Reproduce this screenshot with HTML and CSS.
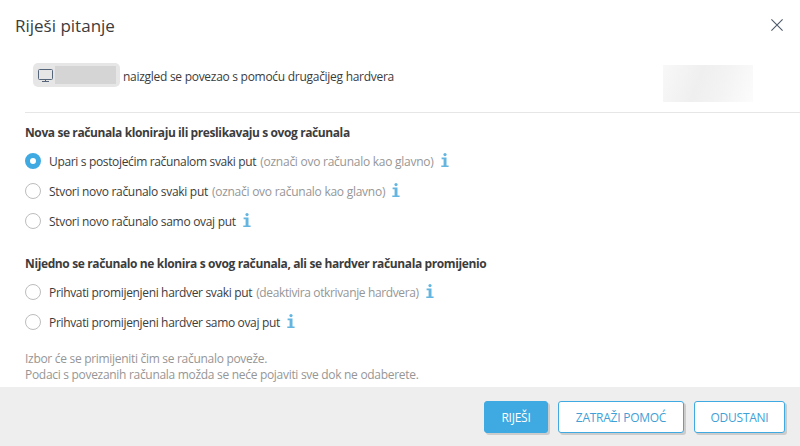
FILE: index.html
```html
<!DOCTYPE html>
<html lang="hr">
<head>
<meta charset="utf-8">
<title>Riješi pitanje</title>
<link rel="stylesheet" href="styles.css">
</head>
<body>
<div class="dialog">
  <header class="header">
    <h1 class="title">Riješi pitanje</h1>
    <svg class="close" width="12" height="12" viewBox="0 0 12 12"><path d="M.4.4l11.2 11.2M11.6.4L.4 11.6"/></svg>
  </header>
  <section class="device">
    <span class="chip">
      <svg class="monitor" width="16" height="13" viewBox="0 0 16 13"><path d="M1.5.5h12a1 1 0 0 1 1 1v8a1 1 0 0 1-1 1h-12a1 1 0 0 1-1-1v-8a1 1 0 0 1 1-1zM7.5 10.5v2M4 12.5h7"/></svg>
      <span class="chip-name"></span>
    </span>
    <span class="device-text">naizgled se povezao s pomoću drugačijeg hardvera</span>
    <span class="redacted"></span>
  </section>
  <main class="body">
    <h2 class="question q1">Nova se računala kloniraju ili preslikavaju s ovog računala</h2>
    <div class="option"><span class="radio checked"></span><span class="label l1">Upari s postojećim računalom svaki put</span><span class="hint h1">(označi ovo računalo kao glavno)</span><svg class="info" width="8" height="14" viewBox="0 0 8 14"><circle cx="4" cy="1.6" r="1.6"/><path d="M.6 4.6h4.9v7.8H7.6V14H.3v-1.6h2.3V6.2h-2z"/></svg></div>
    <div class="option"><span class="radio"></span><span class="label l2">Stvori novo računalo svaki put</span><span class="hint h2">(označi ovo računalo kao glavno)</span><svg class="info" width="8" height="14" viewBox="0 0 8 14"><circle cx="4" cy="1.6" r="1.6"/><path d="M.6 4.6h4.9v7.8H7.6V14H.3v-1.6h2.3V6.2h-2z"/></svg></div>
    <div class="option"><span class="radio"></span><span class="label l3">Stvori novo računalo samo ovaj put</span><svg class="info" width="8" height="14" viewBox="0 0 8 14"><circle cx="4" cy="1.6" r="1.6"/><path d="M.6 4.6h4.9v7.8H7.6V14H.3v-1.6h2.3V6.2h-2z"/></svg></div>
    <h2 class="question second q2">Nijedno se računalo ne klonira s ovog računala, ali se hardver računala promijenio</h2>
    <div class="option"><span class="radio"></span><span class="label l4">Prihvati promijenjeni hardver svaki put</span><span class="hint h4">(deaktivira otkrivanje hardvera)</span><svg class="info" width="8" height="14" viewBox="0 0 8 14"><circle cx="4" cy="1.6" r="1.6"/><path d="M.6 4.6h4.9v7.8H7.6V14H.3v-1.6h2.3V6.2h-2z"/></svg></div>
    <div class="option"><span class="radio"></span><span class="label l5">Prihvati promijenjeni hardver samo ovaj put</span><svg class="info" width="8" height="14" viewBox="0 0 8 14"><circle cx="4" cy="1.6" r="1.6"/><path d="M.6 4.6h4.9v7.8H7.6V14H.3v-1.6h2.3V6.2h-2z"/></svg></div>
    <p class="note">Izbor će se primijeniti čim se računalo poveže.<br>Podaci s povezanih računala možda se neće pojaviti sve dok ne odaberete.</p>
  </main>
  <footer class="footer">
    <button class="btn primary">RIJEŠI</button>
    <button class="btn help">ZATRAŽI POMOĆ</button>
    <button class="btn cancel">ODUSTANI</button>
  </footer>
</div>
</body>
</html>
```
FILE: styles.css
```css
* { box-sizing: border-box; }
body {
  margin: 0;
  background: #fff;
  color: #3c3c3c;
  font: 12px/16px "Open Sans", "Noto Sans", sans-serif;
  letter-spacing: -0.3px;
  white-space: nowrap;
}
.dialog { width: 800px; height: 446px; display: flex; flex-direction: column; overflow: hidden; }
.header { height: 50px; padding: 0 17px 0 15px; display: flex; align-items: center; justify-content: space-between; }
.title { margin: 2px 0 0; font-size: 17px; line-height: 24px; font-weight: 400; letter-spacing: 0; }
.close { fill: none; stroke: #4d5a6b; stroke-width: 1.1; }
.device { height: 63px; margin-left: 25px; padding: 13px 47px 0 8px; display: flex; align-items: flex-start; border-bottom: 1px solid #e6e6e6; }
.chip { width: 87px; height: 24px; padding: 0 4px 0 5px; border-radius: 5px; background: #e6e6e6; display: flex; align-items: center; gap: 1px; }
.monitor { fill: none; stroke: #55657a; }
.chip-name { width: 61px; height: 18px; background: #d5d5d5; }
.device-text { margin: 6px 0 0 3px; letter-spacing: -0.28px; }
.redacted { width: 90px; height: 37px; margin: 2px 0 0 auto; background: linear-gradient(110deg, #f8f8f8, #efefef 40%, #f3f3f3 65%, #fcfcfc); }
.body { flex: 1; min-height: 0; padding: 11px 25px 0; }
.question { margin: 0 0 5px; font-size: 12px; line-height: 17px; font-weight: 700; }
.q1 { letter-spacing: -0.4px; }
.q2 { letter-spacing: -0.38px; }
.second { margin-top: 19px; }
.option { height: 30px; display: flex; align-items: center; }
.radio { width: 16px; height: 16px; border: 1px solid #bdbdbd; border-radius: 50%; margin-right: 8px; }
.checked { border: 5px solid #3fa9e1; }
.label, .hint { margin-top: 2px; }
.hint { margin-left: 4px; color: #969696; }
.l1, .l4, .l5 { letter-spacing: -0.34px; }
.l2 { letter-spacing: -0.3px; }
.h1, .h2 { letter-spacing: -0.26px; }
.h4 { letter-spacing: -0.37px; }
.info { margin: -3px 0 0 7px; fill: #64b5df; }
.note { margin: 14px 0 0; color: #969696; }
.footer { height: 59px; padding: 14px 15px 0; background: #eee; display: flex; justify-content: flex-end; gap: 10px; }
.btn { height: 32px; padding: 1px 0 0; border: 1px solid #3fa9e1; border-radius: 3px; background: #fff; color: #3f9fd6; font: 12px/16px "Open Sans", "Noto Sans", sans-serif; letter-spacing: -0.25px; box-shadow: 2px 2px 0 #ccc; }
.primary { width: 64px; background: #3fa9e1; color: #fff; }
.help { width: 126px; }
.cancel { width: 91px; }
```
